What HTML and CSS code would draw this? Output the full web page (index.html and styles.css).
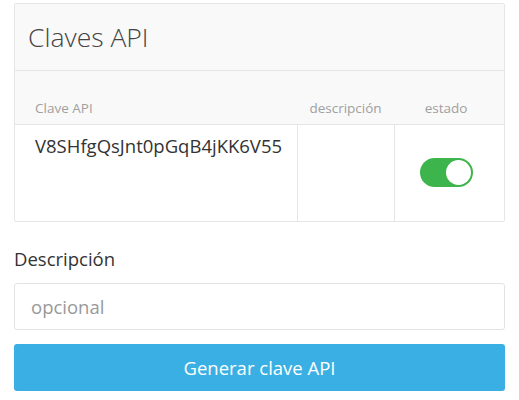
FILE: index.html
```html
<!DOCTYPE html>
<html lang="es">
<head>
    <meta charset="UTF-8">
    <meta name="viewport" content="width=device-width, initial-scale=1.0">
    <title>Claves API</title>
    <link rel="stylesheet" href="styles.css">
</head>
<body>

    <div class="panel">
        <div class="panel-heading">
            <h1>Claves API</h1>
        </div>

        <!-- Lista de claves -->
        <table class="keys">
            <thead>
                <tr>
                    <th class="col-key">Clave API</th>
                    <th class="col-desc">descripción</th>
                    <th class="col-state">estado</th>
                </tr>
            </thead>
            <tbody>
                <tr>
                    <td class="key">V8SHfgQsJnt0pGqB4jKK6V55</td>
                    <td></td>
                    <td class="state">
                        <label class="switch">
                            <input type="checkbox" checked>
                            <span class="slider"></span>
                        </label>
                    </td>
                </tr>
            </tbody>
        </table>
    </div>

    <!-- Formulario nueva clave -->
    <form class="new-key" onsubmit="return false">
        <label for="description">Descripción</label>
        <input type="text" id="description" placeholder="opcional">
        <input type="submit" value="Generar clave API">
    </form>

</body>
</html>
```

FILE: styles.css
```css
body {
    font-family: "Open Sans", sans-serif;
    color: #333;
    background-color: white;
    margin: 0;
    padding: 3px 14px;
}

.panel {
    border: 1px solid #e6e6e6;
    border-radius: 2px;
    background-color: white;
}

.panel-heading {
    background-color: #f9f9f9;
    border-bottom: 1px solid #e6e6e6;
    height: 66px;
    padding: 0 13px;
    display: flex;
    align-items: center;
}

h1 {
    margin: 0;
    font-size: 26.5px;
    font-weight: 300;
    color: #444;
}

.keys {
    width: 100%;
    border-collapse: collapse;
}

.keys th {
    box-sizing: border-box;
    background-color: #f9f9f9;
    color: #a0a0a0;
    font-size: 13.5px;
    font-weight: 400;
    height: 53px;
    padding: 0 0 7px;
    vertical-align: bottom;
    border-bottom: 1px solid #e6e6e6;
}

.col-key {
    text-align: left;
    padding-left: 20px !important;
}

.col-desc {
    width: 97px;
}

.col-state {
    width: 110px;
    padding-right: 6px !important;
}

.keys td {
    box-sizing: border-box;
    height: 97px;
    vertical-align: top;
    border-left: 1px solid #e6e6e6;
}

.keys td:first-child {
    border-left: none;
}

.key {
    font-size: 18.5px;
    padding: 8px 0 0 20px;
}

.state {
    text-align: center;
    vertical-align: middle !important;
    padding-right: 6px;
}

.switch {
    position: relative;
    display: inline-block;
    width: 53px;
    height: 29px;
    margin-top: 4px;
}

.switch input {
    display: none;
}

.slider {
    position: absolute;
    inset: 0;
    background-color: #3db54c;
    border-radius: 15px;
    cursor: pointer;
}

.slider::after {
    content: "";
    position: absolute;
    top: 2px;
    right: 2px;
    width: 25px;
    height: 25px;
    border-radius: 50%;
    background-color: white;
}

.new-key {
    margin-top: 24px;
}

.new-key label {
    display: block;
    font-size: 18.5px;
    margin-bottom: 12px;
}

input[type="text"] {
    display: block;
    box-sizing: border-box;
    width: 100%;
    height: 47px;
    padding: 0 16px;
    font-family: inherit;
    font-size: 18.5px;
    color: #333;
    border: 1px solid #e3e3e3;
    border-radius: 3px;
}

input[type="text"]::placeholder {
    color: #999;
}

input[type="submit"] {
    display: block;
    width: 100%;
    height: 47px;
    margin-top: 14px;
    font-family: inherit;
    font-size: 18.5px;
    background-color: #3aafe3;
    border: none;
    color: white;
    cursor: pointer;
    border-radius: 3px;
}
```
